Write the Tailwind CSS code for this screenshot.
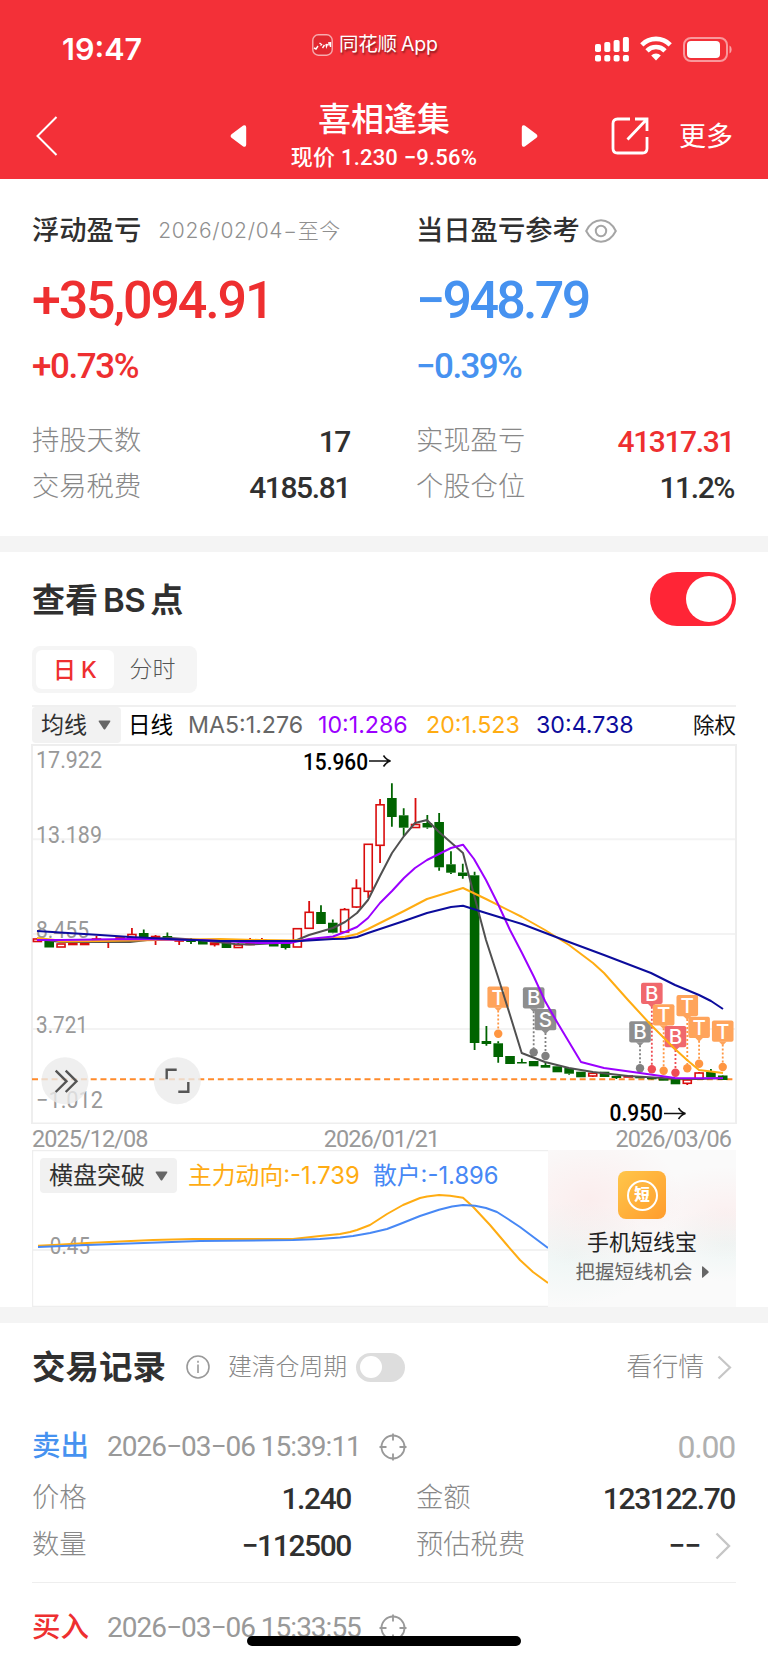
<!DOCTYPE html>
<html lang="zh-CN">
<head>
  <meta charset="UTF-8" />
  <meta name="viewport" content="width=device-width, initial-scale=1.0" />
  <title>喜相逢集 - 持仓盈亏</title>
  <script src="https://cdn.jsdelivr.net/npm/@tailwindcss/browser@4"></script>
</head>
<body class="bg-white">
  <div class="relative w-[768px] h-[1663px] overflow-hidden bg-white font-['Inter','Noto_Sans_CJK_SC',sans-serif] text-[#303030] whitespace-nowrap">

    <!-- Header -->
    <header class="h-[179px] bg-[#f33038] text-white">
      <div class="flex items-center h-[94px] pt-[4px] pl-[62px] pr-[36px]">
        <span class="w-[250px] text-[30.500px] font-semibold">19:47</span>
        <div class="flex items-center gap-[6px] -mt-[8px] w-[283px] text-[19.500px] tracking-[-0.200px] text-shadow-[1px_2px_2px_rgba(0,0,0,0.45)]">
          <svg class="w-[21px] h-[22px]" viewBox="0 0 21 22" fill="none" stroke="#fff">
            <rect x=".8" y=".8" width="19.4" height="20.4" rx="5.5" fill="#e02830" stroke="#fff" stroke-opacity=".6" stroke-width="1.4" />
            <path d="M2 14l2 1 2-3M7.500 9l2 1.500-1 1M10.500 14l2-3M14 10l.5 2.500 1-2.500M17 8v3.500M18.500 8v5" stroke-width="1.400" />
          </svg>
          <span>同花顺<span class="ml-[4px]">App</span></span>
        </div>
        <div class="flex items-center gap-[11px]">
          <svg class="w-[34px] h-[26px]" viewBox="0 0 34 26" fill="#fff">
            <rect x="0" y="8" width="6" height="8" rx="1.800" />
            <rect x="9.300" y="6" width="6" height="10" rx="1.800" />
            <rect x="18.600" y="4" width="6" height="12" rx="1.800" />
            <rect x="27.900" y="1" width="6" height="15" rx="1.800" />
            <rect x="0" y="19" width="6" height="6.500" rx="1.800" />
            <rect x="9.300" y="19" width="6" height="6.500" rx="1.800" />
            <rect x="18.600" y="19" width="6" height="6.500" rx="1.800" />
            <rect x="27.900" y="19" width="6" height="6.500" rx="1.800" />
          </svg>
          <svg class="w-[32px] h-[25px] -mt-[2px]" viewBox="0 0 32 25" fill="none" stroke="#fff" stroke-width="4.600">
            <path d="M1.800 8.800a20 20 0 0 1 28.400 0" />
            <path d="M7 14.800a12.600 12.600 0 0 1 18 0" />
            <path d="M16 24.500l-4.800-4.900a6.800 6.800 0 0 1 9.600 0z" fill="#fff" stroke="none" />
          </svg>
          <svg class="w-[49px] h-[25px]" viewBox="0 0 49 25">
            <rect x="1" y="1" width="43" height="23" rx="7" fill="none" stroke="#fff" stroke-opacity=".5" stroke-width="2" />
            <rect x="4" y="4" width="33" height="17" rx="4" fill="#fff" />
            <path d="M46.500 8.500c2.800 1.200 2.800 6.800 0 8z" fill="#fff" fill-opacity=".55" />
          </svg>
        </div>
      </div>

      <div class="flex items-center h-[83px]">
        <svg class="ml-[35px] w-[24px] h-[42px]" viewBox="0 0 24 42" fill="none" stroke="#fff" stroke-width="2">
          <path d="M21.500 2L2.500 21l19 19" />
        </svg>
        <svg class="ml-[171px] w-[17px] h-[24px]" viewBox="0 0 17 24" fill="#fff">
          <path d="M1.500 10.200L13.200 1.500q3-1.200 3 2v17q0 3.200-3 2L1.500 13.800q-1.800-1.800 0-3.600z" />
        </svg>
        <div class="w-[274px] flex flex-col items-center mt-[4px]">
          <h1 class="text-[33px] leading-[40px] font-medium">喜相逢集</h1>
          <div class="leading-[38px] font-medium font-['Roboto','Noto_Sans_CJK_SC',sans-serif] text-[22px] tracking-[0.200px]">现价 1.230 −9.56%</div>
        </div>
        <svg class="w-[17px] h-[24px]" viewBox="0 0 17 24" fill="#fff">
          <path d="M15.500 10.200L3.800 1.500q-3-1.200-3 2v17q0 3.200 3 2l11.700-8.700q1.800-1.800 0-3.600z" />
        </svg>
        <svg class="ml-[73px] w-[38px] h-[38px]" viewBox="0 0 38 38" fill="none" stroke="#fff" stroke-width="2.800">
          <path d="M19 2H6.500Q2 2 2 6.500v25Q2 36 6.500 36h25q4.500 0 4.500-4.500V20M24 2h12v12M36 2L16.500 22.500" />
        </svg>
        <span class="ml-[30px] mt-[3px] text-[27px]">更多</span>
      </div>
    </header>

    <!-- Profit summary -->
    <section class="grid grid-cols-2 gap-x-16 h-[357px] px-8 pt-[32px]">
      <div>
        <div class="flex items-center h-10">
          <span class="text-[27.300px] font-medium">浮动盈亏</span>
          <span class="ml-[17px] text-[21px] font-light tracking-[0.700px] text-[#8f8f8f]">2026/02/04−至今</span>
        </div>
        <div class="flex items-center h-24 pt-[4px] font-['Roboto'] font-medium text-[52px] tracking-[-2.150px] text-[#ee2f30]">+35,094.91</div>
        <div class="flex items-center h-10 pt-px font-['Roboto'] font-medium text-[35px] tracking-[-1.400px] text-[#ee2f30]">+0.73%</div>
        <div class="mt-[31px] flex items-center justify-between h-[46px]">
          <span class="text-[27.300px] font-light text-[#888]">持股天数</span>
          <span class="font-['Roboto'] font-medium text-[30px] tracking-[-1.400px] mr-[2px]">17</span>
        </div>
        <div class="flex items-center justify-between h-[46px]">
          <span class="text-[27.300px] font-light text-[#888]">交易税费</span>
          <span class="font-['Roboto'] font-medium text-[30px] tracking-[-1.400px] mr-[2px]">4185.81</span>
        </div>
      </div>
      <div>
        <div class="flex items-center h-10">
          <span class="text-[27.300px] font-medium">当日盈亏参考</span>
          <svg class="ml-[5px] w-[32px] h-[24px]" viewBox="0 0 32 24" fill="none" stroke="#a5a5a5" stroke-width="2">
            <path d="M1.200 12C8.500-2.200 23.500-2.200 30.800 12 23.500 26.200 8.500 26.200 1.200 12z" />
            <circle cx="16" cy="12" r="5.200" />
          </svg>
        </div>
        <div class="flex items-center h-24 pt-[4px] font-['Roboto'] font-medium text-[52px] tracking-[-2.700px] text-[#4692f0]">−948.79</div>
        <div class="flex items-center h-10 pt-px font-['Roboto'] font-medium text-[35px] tracking-[-1.600px] text-[#4692f0]">−0.39%</div>
        <div class="mt-[31px] flex items-center justify-between h-[46px]">
          <span class="text-[27.300px] font-light text-[#888]">实现盈亏</span>
          <span class="font-['Roboto'] font-medium text-[30px] tracking-[-1.400px] mr-[2px] text-[#ee2f30]">41317.31</span>
        </div>
        <div class="flex items-center justify-between h-[46px]">
          <span class="text-[27.300px] font-light text-[#888]">个股仓位</span>
          <span class="font-['Roboto'] font-medium text-[30px] tracking-[-1.400px] mr-[2px]">11.2%</span>
        </div>
      </div>
    </section>

    <div class="h-4 bg-[#f4f4f4]"></div>

    <!-- BS points -->
    <section class="px-8 h-[755px]">
      <div class="flex items-center justify-between h-[94px]">
        <h2 class="mt-[3px] text-[33px] font-semibold"><span>查看</span><span class="mx-[5px] tracking-[-0.500px]">BS</span><span>点</span></h2>
        <div class="flex items-center justify-end w-[86px] h-[54px] rounded-full bg-[#ff2536] pr-[4px]">
          <div class="size-[46px] rounded-full bg-white"></div>
        </div>
      </div>

      <div class="flex items-center w-[165px] h-[47px] rounded-lg bg-[#f5f5f5] p-1 text-[23px]">
        <div class="w-[78px] h-[39px] leading-[40px] rounded-md bg-white text-center font-medium text-[#ee2f30]">日<span class="ml-[5px]">K</span></div>
        <div class="w-[77px] text-center text-[#555] font-light">分时</div>
      </div>

      <div class="mt-3 flex items-center h-[38px] border-t-2 border-[#f0f0f0] text-[23.200px]">
        <div class="flex items-center w-[89px] h-[36px] rounded bg-[#f2f2f2] pl-[9px] gap-[11px] text-[23px]">
          均线
          <svg class="w-[13px] h-[10px]" viewBox="0 0 13 10" fill="#666"><path d="M1.500.5h10q1.400 0 .7 1.200L7.400 9q-.9 1-1.800 0L.8 1.700Q.1.500 1.500.5z" /></svg>
        </div>
        <span class="ml-[7px] w-[60px] text-[22.500px] text-black">日线</span>
        <span class="w-[130px] text-[#666]">MA5:1.276</span>
        <span class="w-[108px] text-[#9b00ff]">10:1.286</span>
        <span class="w-[110px] text-[#ffac12]">20:1.523</span>
        <span class="text-[#0c0c9c]">30:4.738</span>
        <span class="ml-auto text-[21.500px] text-[#111]">除权</span>
      </div>

      <svg id="kline" class="block -ml-px w-[706px] h-[381px]" viewBox="31 743 706 381" font-family="Roboto, sans-serif" font-size="23.500">
        <g fill="none" stroke="#eee" stroke-width="2">
          <path d="M32 745H736V1123.500H32z" />
          <path d="M33 839.300H735M33 934H735M33 1029H735" stroke="#f3f3f3" />
        </g>
        <g fill="#999">
          <text x="36" y="767.500" textLength="66" lengthAdjust="spacingAndGlyphs">17.922</text>
          <text x="36" y="843" textLength="66" lengthAdjust="spacingAndGlyphs">13.189</text>
          <text x="36" y="938" textLength="53" lengthAdjust="spacingAndGlyphs">8.455</text>
          <text x="36" y="1032.500" textLength="52" lengthAdjust="spacingAndGlyphs">3.721</text>
          <text x="36" y="1108" textLength="67" lengthAdjust="spacingAndGlyphs">−1.012</text>
        </g>
        <path d="M32 1079.300H736" stroke="#ff8a2b" stroke-width="2" stroke-dasharray="6 3.780" />
        <g id="candles"></g>
        <g id="markers"></g>
        <g fill="none" stroke-width="2" stroke-linejoin="round">
          <polyline stroke="#505050" points="37,939 61,942 130,942 160,938.500 170,938 200,940 235,944 250,944.500 280,943 297,940 309,935 333,928 345,922 357,913 368,900 380,876 392,853 404,836 415,823 427,820 439,832 463,853 474,895 486,940 498,977 510,1015 521.700,1053 545,1062 569,1068 593,1072 628,1076 675,1078.700 699,1079 723,1078" />
          <polyline stroke="#ffac12" points="37,938 55,940 61,941.500 100,941 160,940 220,939 260,940 300,940.500 333,938 345,936.700 357,934 368,929 380,923 404,911 427,899 463,888 486,899 522,917 545,930 569,945 593,963 604,973 628,1000 651,1025 675,1049 687,1060 699,1070 723,1073" />
          <polyline stroke="#9b00ff" points="37,940 61,940 130,939 200,940 260,943 290,943 309,939 333,936.500 345,932 357,927 368,918 380,903 392,891 404,878 415,868 427,860 439,854 451,848 463,844.700 474,859 486,880 498,904 510,930 522,953 534,977 545,1001 557,1022 569,1042 581,1062 604,1068 640,1073 675,1078 723,1078.300" />
          <polyline stroke="#0c0c9c" points="37,931 60,932.500 100,935 130,937 180,939.500 220,941 300,941 333,939 345,938.700 357,937 368,933 380,929 404,921 427,913 451,907 463,905.700 486,913 522,924 569,942 604,955 651,973 675,985 699,995 711,1001 723,1009" />
        </g>
        <g fill="#000" font-weight="500">
          <text x="303" y="769.500" textLength="65" lengthAdjust="spacingAndGlyphs">15.960</text>
          <text x="609.500" y="1121" textLength="53.500" lengthAdjust="spacingAndGlyphs">0.950</text>
        </g>
        <g fill="none" stroke="#111" stroke-width="1.600">
          <path d="M369 761H390M383.500 755.500q3 4.500 7 5.500q-4 1-7 5.500" />
          <path d="M664 1113.500H685M678.500 1108q3 4.500 7 5.500q-4 1-7 5.500" />
        </g>
        <g fill="#ebebeb" fill-opacity=".8">
          <circle cx="65" cy="1080.700" r="23.500" />
          <circle cx="177.300" cy="1080.700" r="23.500" />
        </g>
        <path d="M55.700 1070.700L66.500 1081.300 55.700 1092M65.700 1070.700L76.500 1081.300 65.700 1092M166.700 1079.300V1069.700H176.700M178.300 1091.700H188.300V1082" fill="none" stroke="#555" stroke-width="2.400" />
      </svg>

      <div class="flex justify-between h-[26px] pr-[5px] pt-[2px] leading-[26px] font-['Roboto'] text-[23.500px] tracking-[-0.950px] text-[#999]">
        <span>2025/12/08</span>
        <span>2026/01/21</span>
        <span>2026/03/06</span>
      </div>

      <div class="relative flex h-[157px]">
        <svg class="block w-[516px] h-[157px]" viewBox="32 1150 516 157">
          <path d="M548 1150.500H32.500V1306.500H548M33 1250H548" fill="none" stroke="#eee" stroke-width="1.400" />
          <text x="38" y="1253.500" fill="#999" font-family="Roboto, sans-serif" font-size="23" textLength="52" lengthAdjust="spacingAndGlyphs">−0.45</text>
          <g fill="none" stroke-width="2" stroke-linejoin="round">
            <polyline stroke="#ffac12" points="38,1245.700 58,1244.700 87,1243 120,1241.500 153,1240 193,1239 293,1239 320,1236 340,1234 350,1232 357,1230 370,1225 387,1214 403,1205 420,1198 427,1196.500 439,1195 450,1195.700 463,1197.700 473,1206.700 490,1225 507,1245 520,1260 533,1272 548,1283" />
            <polyline stroke="#4788f5" points="38,1247 87,1245 200,1241 293,1240 320,1239 340,1237.500 353,1236 370,1233 387,1229 400,1224 420,1216 439,1209.700 452,1206.500 463,1205 475,1205.700 486,1208 497,1212 508,1219 520,1227 548,1248" />
          </g>
        </svg>
        <div class="absolute left-[8px] top-[8px] flex items-center h-[35px] text-[23.800px]">
          <div class="flex items-center w-[137px] h-[35px] rounded bg-[#f1f1f1] pl-[9px] gap-[10px] text-[24px]">
            横盘突破
            <svg class="w-[13px] h-[10px]" viewBox="0 0 13 10" fill="#666"><path d="M1.500.5h10q1.400 0 .7 1.200L7.400 9q-.9 1-1.800 0L.8 1.700Q.1.500 1.500.5z" /></svg>
          </div>
          <span class="ml-[11px] mt-px w-[185px] text-[#ffac12]">主力动向:-1.739</span>
          <span class="mt-px text-[#4788f5]">散户:-1.896</span>
        </div>
        <div class="flex flex-col items-center w-[188px] h-[157px] pt-[21px] bg-[#fafafa] bg-[radial-gradient(ellipse_at_22%_32%,rgba(255,205,205,0.28),transparent_45%),radial-gradient(ellipse_at_95%_40%,rgba(255,215,215,0.28),transparent_35%),radial-gradient(ellipse_at_12%_66%,rgba(205,235,230,0.26),transparent_36%),radial-gradient(ellipse_at_95%_60%,rgba(205,235,230,0.26),transparent_28%)]">
          <div class="flex items-center justify-center size-[48px] rounded-lg bg-linear-to-br from-[#ffc64a] to-[#ff9c2c]">
            <div class="flex items-center justify-center size-[31px] rounded-full border-2 border-white text-[15.500px] leading-none font-black text-white">短</div>
          </div>
          <div class="mt-[8px] text-[22px] leading-[30px] text-[#222]">手机短线宝</div>
          <div class="flex items-center gap-[9px] mt-px text-[19.500px] leading-[28px] text-[#666]">
            把握短线机会
            <svg class="w-[7px] h-[12px]" viewBox="0 0 7 12" fill="#666"><path d="M0 .8q0-1 1-.4l5.400 4.800q.6.800 0 1.600L1 11.600q-1 .6-1-.4z" /></svg>
          </div>
        </div>
      </div>
    </section>

    <div class="h-4 bg-[#f4f4f4]"></div>

    <!-- Trade records -->
    <section class="px-8">
      <div class="flex items-center h-[88px]">
        <h2 class="text-[33.500px] font-semibold">交易记录</h2>
        <svg class="ml-[20px] w-[24px] h-[24px]" viewBox="0 0 24 24" fill="none" stroke="#999" stroke-width="1.600">
          <circle cx="12" cy="12" r="11" />
          <path d="M12 9.500v8.500M12 5.700v2" />
        </svg>
        <span class="ml-[18px] text-[23.800px] font-light text-[#888]">建清仓周期</span>
        <div class="flex items-center ml-[9px] w-[49px] h-[29px] rounded-full bg-[#ddd] pl-[4px]">
          <div class="size-[22px] rounded-full bg-white"></div>
        </div>
        <span class="ml-auto text-[25.800px] font-light text-[#888]">看行情</span>
        <svg class="ml-[13px] mr-[4px] w-[15px] h-[25px]" viewBox="0 0 15 25" fill="none" stroke="#c6c6c6" stroke-width="2.200"><path d="M1.500 1.500l11.500 11-11.500 11" /></svg>
      </div>

      <div class="h-[172px] border-b border-[#eee]">
        <div class="flex items-center h-16 pt-[7px]">
          <span class="text-[28.500px] font-medium text-[#4692f0]">卖出</span>
          <span class="ml-[18px] w-[254px] font-['Roboto'] text-[28px] tracking-[-1px] text-[#999]">2026−03−06 15:39:11</span>
          <svg class="ml-[18px] w-[28px] h-[28px]" viewBox="0 0 28 28" fill="none" stroke="#999" stroke-width="1.800">
            <circle cx="14" cy="14" r="11.500" />
            <path d="M14 .5v7M14 20.500v7M.5 14h7M20.500 14h7" />
          </svg>
          <span class="ml-auto mr-px font-['Roboto'] text-[32px] tracking-[-1.200px] text-[#b0b0b0]">0.00</span>
        </div>
        <div class="grid grid-cols-2 gap-x-16">
          <div class="flex items-center justify-between h-[46px] pt-px">
            <span class="text-[27.300px] font-light text-[#888]">价格</span>
            <span class="font-['Roboto'] font-medium text-[30px] tracking-[-1.400px] mr-px">1.240</span>
          </div>
          <div class="flex items-center justify-between h-[46px] pt-px">
            <span class="text-[27.300px] font-light text-[#888]">金额</span>
            <span class="font-['Roboto'] font-medium text-[30px] tracking-[-1.400px] mr-px">123122.70</span>
          </div>
          <div class="flex items-center justify-between h-[46px] pt-[3px]">
            <span class="text-[27.300px] font-light text-[#888]">数量</span>
            <span class="font-['Roboto'] font-medium text-[30px] tracking-[-1.400px] mr-px">−112500</span>
          </div>
          <div class="flex items-center h-[46px] pt-[3px]">
            <span class="text-[27.300px] font-light text-[#888]">预估税费</span>
            <span class="ml-auto font-['Roboto'] font-medium text-[30px] tracking-[-1px]">−−</span>
            <svg class="ml-[15px] mr-[5px] w-[16px] h-[28px]" viewBox="0 0 16 28" fill="none" stroke="#c6c6c6" stroke-width="2.400"><path d="M1.500 1.500l12.500 12.500-12.500 12.500" /></svg>
          </div>
        </div>
      </div>

      <div class="flex items-center h-[88px] pt-px">
        <span class="text-[28.500px] font-medium text-[#ee2f30]">买入</span>
        <span class="ml-[18px] w-[254px] font-['Roboto'] text-[28px] tracking-[-1px] text-[#999]">2026−03−06 15:33:55</span>
        <svg class="ml-[18px] w-[28px] h-[28px]" viewBox="0 0 28 28" fill="none" stroke="#999" stroke-width="1.800">
          <circle cx="14" cy="14" r="11.500" />
          <path d="M14 .5v7M14 20.500v7M.5 14h7M20.500 14h7" />
        </svg>
      </div>
    </section>

    <!-- Home indicator -->
    <div class="absolute left-[247px] top-[1636px] w-[274px] h-[10px] rounded-full bg-black"></div>
  </div>

  <script>
    // Each candle: [up, body top, body bottom, wick top, wick bottom]
    const candles = [
      [1, 939, 941.5, 938, 942], [0, 941, 947.5, 941, 947.5], [1, 944, 947, 944, 947], [1, 943, 944.5, 943, 945], [1, 943, 944.5, 943, 945],
      [1, 939, 941, 936, 943], [1, 941, 942, 939, 948], [1, 938, 939, 938, 939], [1, 934.5, 939, 928, 939], [0, 933, 938, 929.5, 938],
      [1, 936.5, 937.5, 935, 945], [0, 936, 939, 932.5, 939], [1, 940, 941, 939, 945], [0, 940, 942, 938, 944], [0, 940, 944.5, 940, 944.5],
      [1, 943, 944.5, 943, 946.5], [0, 942, 948, 942, 948], [1, 945, 947.5, 943, 948], [1, 943, 944.5, 938, 945], [1, 940, 941.5, 938, 942],
      [0, 940, 946.5, 940, 946.5], [0, 943, 948, 943, 949.5], [1, 928.7, 947, 928, 947], [1, 912.3, 928.3, 901, 929], [0, 912, 924, 905.3, 924],
      [0, 922.7, 932.7, 919.5, 933.3], [1, 909.6, 932, 908, 932], [1, 888.3, 907, 879.3, 908], [1, 844.3, 891.3, 844, 898], [1, 804.8, 845.3, 799, 863],
      [0, 798, 817, 783.3, 826.7], [0, 815.3, 827.7, 808.3, 836], [1, 824.5, 827.5, 798, 828], [0, 823, 827.5, 815, 828.7], [0, 822, 867.3, 813, 870.7],
      [0, 864.3, 872.7, 851.3, 874], [0, 872.5, 876, 863.7, 878.7], [0, 875.3, 1043, 871.7, 1050], [0, 1041, 1044, 1026, 1045.7], [0, 1043.3, 1057, 1041.3, 1062.7],
      [0, 1056, 1064, 1056, 1064], [0, 1062, 1063.5, 1058.7, 1063.5], [0, 1061, 1066.3, 1061, 1066.3], [0, 1065, 1067.7, 1063, 1067.7], [0, 1066.3, 1072.3, 1066.3, 1072.3],
      [0, 1068, 1073.7, 1068, 1074.7], [0, 1071.7, 1077.3, 1071.7, 1077.3], [1, 1073.3, 1076, 1073, 1077], [0, 1071.7, 1077, 1071.7, 1077], [0, 1076, 1078, 1076, 1079],
      [1, 1076, 1077, 1076, 1077], [0, 1076, 1078.3, 1076, 1078.3], [0, 1077.3, 1079.3, 1077, 1079.5], [0, 1078, 1080.7, 1078, 1080.7], [0, 1078.7, 1084.3, 1078.7, 1084.3],
      [1, 1080, 1083.3, 1079, 1085], [1, 1073, 1079, 1072, 1079], [0, 1072, 1077.3, 1069, 1077.3], [0, 1075.5, 1080, 1075, 1080]
    ];
    const x = i => 37.4 + i * 11.816;
    document.getElementById('candles').innerHTML = candles.map(([up, top, bottom, high, low], i) => {
      const c = up ? '#d90d0d' : '#006400';
      const w = up ? 8 : 9.6;
      return `<path d="M${x(i)} ${high}V${top}M${x(i)} ${bottom}V${low}" stroke="${c}" stroke-width="1.8"/>` +
        `<rect x="${x(i) - w / 2}" y="${top}" width="${w}" height="${bottom - top}" fill="${up ? '#fff' : c}" ${up ? `stroke="${c}" stroke-width="1.6"` : ''}/>`;
    }).join('');

    // Trade markers: [candle index, label, colour, box top, dot y]
    const orange = '#ffa45b', red = '#f0686d', gray = '#8e8e8e';
    const markers = [
      [39, 'T', orange, 986.5, 1033.7], [42, 'B', gray, 987.3, 1052.3], [43, 'S', gray, 1009, 1056], [51, 'B', gray, 1021.3, 1068.3],
      [52, 'B', red, 982.7, 1069.3], [53, 'T', orange, 1004.3, 1070.7], [54, 'B', red, 1026, 1072.7], [55, 'T', orange, 995, 1068.3],
      [56, 'T', orange, 1016.7, 1063.7], [58, 'T', orange, 1020.5, 1067]
    ];
    document.getElementById('markers').innerHTML = markers.map(([i, label, c, y, dot]) => {
      const cx = x(i);
      const solid = c === orange ? '#ff9642' : c === red ? '#ee4d55' : '#808080';
      return `<path d="M${cx} ${y + 24}V${dot - 4}" stroke="${solid}" stroke-width="1.8" stroke-dasharray="2 2"/>` +
        `<circle cx="${cx}" cy="${dot}" r="4.2" fill="${solid}"/>` +
        `<rect x="${cx - 10.8}" y="${y}" width="21.6" height="21.2" rx="2" fill="${c}"/>` +
        `<path d="M${cx - 4} ${y + 21}h8l-4 4z" fill="${c}"/>` +
        `<text x="${cx}" y="${y + 18}" text-anchor="middle" font-family="Inter, sans-serif" font-size="20.5" font-weight="500" fill="#fff">${label}</text>`;
    }).join('');
  </script>
</body>
</html>
